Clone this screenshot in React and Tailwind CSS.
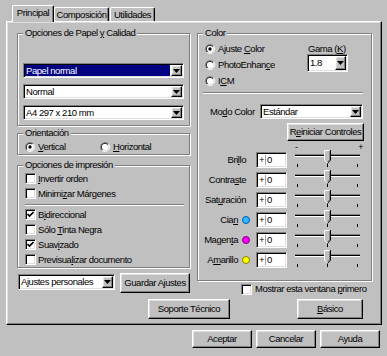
import React from "react";

const raised =
  "border border-t-white border-l-white border-r-black border-b-black shadow-[inset_-1px_-1px_0_#808080,inset_1px_1px_0_#dfdfdf]";
const sunken =
  "border border-t-[#808080] border-l-[#808080] border-r-white border-b-white shadow-[inset_1px_1px_0_#000,inset_-1px_-1px_0_#dfdfdf]";

function Group({ label, className, children }) {
  return (
    <div className={`border border-[#808080] shadow-[inset_1px_1px_0_#fff,1px_1px_0_#fff] ${className}`}>
      <div className="-mt-[7px] ml-[5px] px-[2px] w-fit bg-[#c0c0c0] whitespace-nowrap">{label}</div>
      {children}
    </div>
  );
}

function Arrow() {
  return (
    <svg width="7" height="4" viewBox="0 0 7 4">
      <path d="M0 0H7L3.5 4Z" fill="#000" />
    </svg>
  );
}

function Combo({ value, selected, className }) {
  return (
    <div className={`flex p-[1px] bg-white ${sunken} ${className}`}>
      <div className="flex-1 min-w-0 flex">
        <span
          className={`flex-1 flex items-center pl-[1px] mr-[1px] whitespace-nowrap overflow-hidden ${
            selected ? "bg-[#000080] text-white" : ""
          }`}
        >
          {value}
        </span>
      </div>
      <div className={`w-[11px] shrink-0 bg-[#c0c0c0] flex items-center justify-center ${raised}`}>
        <Arrow />
      </div>
    </div>
  );
}

function Button({ className, children }) {
  return (
    <div className={`bg-[#c0c0c0] flex items-center justify-center whitespace-nowrap ${raised} ${className}`}>
      {children}
    </div>
  );
}

function Radio({ checked }) {
  return (
    <svg width="10" height="10" viewBox="0 0 12 12" className="shrink-0">
      <defs>
        <linearGradient id="rOut" x1="0" y1="0" x2="1" y2="1">
          <stop offset="0.5" stopColor="#808080" />
          <stop offset="0.5" stopColor="#ffffff" />
        </linearGradient>
        <linearGradient id="rIn" x1="0" y1="0" x2="1" y2="1">
          <stop offset="0.5" stopColor="#000000" />
          <stop offset="0.5" stopColor="#dfdfdf" />
        </linearGradient>
      </defs>
      <circle cx="6" cy="6" r="5.5" fill="none" stroke="url(#rOut)" />
      <circle cx="6" cy="6" r="4.5" fill="#fff" stroke="url(#rIn)" />
      {checked && <circle cx="6" cy="6" r="2" fill="#000" />}
    </svg>
  );
}

function Check({ checked }) {
  return (
    <div className={`w-[11px] h-[11px] shrink-0 bg-white ${sunken} flex items-center justify-center`}>
      {checked && (
        <svg width="7" height="7" viewBox="0 0 7 7">
          <path d="M0.5 3 L2.5 5 L6.5 1" fill="none" stroke="#000" strokeWidth="1.6" />
        </svg>
      )}
    </div>
  );
}

function CheckRow({ checked, children }) {
  return (
    <div className="flex items-center h-[15px] pl-[7px]">
      <Check checked={checked} />
      <span className="ml-[2px] whitespace-nowrap">{children}</span>
    </div>
  );
}

function Slider() {
  return (
    <svg width="68" height="20" className="ml-[7px] -mt-[3px] shrink-0">
      <rect x="1" y="5" width="65" height="1" fill="#808080" />
      <rect x="1" y="6" width="65" height="1" fill="#000" />
      <rect x="1" y="7" width="65" height="1" fill="#fff" />
      <polygon points="30,1 37,1 37,11 33.5,14.5 30,11" fill="#c0c0c0" />
      <path d="M30.5 11 V1.5 H36" fill="none" stroke="#fff" />
      <path d="M30.5 11 L33.5 14" fill="none" stroke="#fff" />
      <path d="M36.5 1 V11 L33.5 14.5" fill="none" stroke="#000" />
      <path d="M35.5 2 V10.5 L33.5 12.5" fill="none" stroke="#808080" />
      <rect x="3" y="15" width="1" height="3" fill="#000" />
      <rect x="33" y="15" width="1" height="3" fill="#000" />
      <rect x="63" y="15" width="1" height="3" fill="#000" />
    </svg>
  );
}

const sliders = [
  { label: <>Bri<u>l</u>lo</> },
  { label: <>Contra<u>s</u>te</> },
  { label: <>Sat<u>u</u>ración</> },
  { label: <>Cia<u>n</u></>, dot: "bg-[#30b8ff] border-[#0058b0]" },
  { label: <>Magen<u>t</u>a</>, dot: "bg-[#ff00ff] border-[#800080]" },
  { label: <>A<u>m</u>arillo</>, dot: "bg-[#ffff00] border-[#808000]" },
];

function Tab({ active, className, children }) {
  return active ? (
    <div className={`relative z-10 h-[17px] bg-[#c0c0c0] rounded-t-[2px] border-t border-l border-r border-t-white border-l-white border-r-black shadow-[inset_-1px_0_0_#808080] flex justify-center pt-[1px] whitespace-nowrap ${className}`}>
      {children}
    </div>
  ) : (
    <div className={`h-[14px] mb-[1px] bg-[#c0c0c0] rounded-t-[2px] border-t border-l border-r border-t-white border-l-white border-r-black shadow-[inset_-1px_0_0_#808080] flex justify-center pt-[1px] whitespace-nowrap ${className}`}>
      {children}
    </div>
  );
}

export default function App() {
  return (
    <div className="w-[387px] h-[356px] overflow-hidden bg-[#c0c0c0] pt-[5px] pl-[6px] text-black text-[9.5px] tracking-[-0.45px] leading-[12px] font-['Liberation_Sans',Arial,sans-serif]">
      <div className="flex items-end h-[17px] pl-[6px]">
        <Tab active className="w-[42px]">Principal</Tab>
        <Tab className="w-[55px]">Composición</Tab>
        <Tab className="w-[45px] ml-[1px]">Utilidades</Tab>
      </div>

      <div className={`-mt-[1px] w-[376px] h-[304px] pt-[11px] pl-[10px] border border-t-white border-l-white border-r-black border-b-black shadow-[inset_-1px_-1px_0_#808080,inset_1px_1px_0_#dfdfdf]`}>
        <div className="flex items-start">
          {/* left column */}
          <div className="w-[173px]">
            <Group label={<>Opciones de Papel <u>y</u> Calidad</>} className="h-[93px]">
              <div className="px-[5px]">
                <Combo selected value="Papel normal" className="mt-[24px] h-[15px]" />
                <Combo value="Normal" className="mt-[6px] h-[15px]" />
                <Combo value="A4 297 x 210 mm" className="mt-[6px] h-[15px]" />
              </div>
            </Group>

            <Group label="Orientación" className="mt-[7px] h-[22px]">
              <div className="flex items-center h-[12px] mt-[2px] pl-[7px]">
                <div className="flex items-center w-[75px]">
                  <Radio checked />
                  <span className="ml-[3px]"><u>V</u>ertical</span>
                </div>
                <div className="flex items-center">
                  <Radio />
                  <span className="ml-[3px]"><u>H</u>orizontal</span>
                </div>
              </div>
            </Group>

            <Group label="Opciones de impresión" className="mt-[10px] h-[103px]">
              <CheckRow><u>I</u>nvertir orden</CheckRow>
              <CheckRow>Minimi<u>z</u>ar Márgenes</CheckRow>
              <div className="mt-[3px] ml-[7px] mr-[5px] h-[2px] border-t border-t-[#808080] border-b border-b-white" />
              <div className="mt-[1px]">
                <CheckRow checked>B<u>i</u>direccional</CheckRow>
                <CheckRow>Sólo <u>T</u>inta Negra</CheckRow>
                <CheckRow checked>Suav<u>i</u>zado</CheckRow>
                <CheckRow>Previsua<u>l</u>izar documento</CheckRow>
              </div>
            </Group>

            <div className="flex items-start mt-[5px]">
              <Combo value="Ajustes personales" className="ml-[1px] mt-[1px] w-[97px] h-[16px]" />
              <Button className="ml-[5px] w-[70px] h-[20px]">Guardar Ajustes</Button>
            </div>
          </div>

          {/* right column */}
          <div className="ml-[7px] w-[175px]">
            <Group label="Color" className="h-[248px]">
              <div className="flex mt-[2px]">
                <div className="w-[109px] pl-[7px]">
                  <div className="flex items-center h-[16px]">
                    <Radio checked />
                    <span className="ml-[3px] whitespace-nowrap">Ajuste <u>C</u>olor</span>
                  </div>
                  <div className="flex items-center h-[16px]">
                    <Radio />
                    <span className="ml-[3px] whitespace-nowrap">PhotoEnhan<u>c</u>e</span>
                  </div>
                  <div className="flex items-center h-[16px]">
                    <Radio />
                    <span className="ml-[3px] whitespace-nowrap">I<u>C</u>M</span>
                  </div>
                </div>
                <div>
                  <div className="mt-[2px] ml-[1px] whitespace-nowrap">Gama (<u>K</u>)</div>
                  <Combo value="1.8" className="-mt-[1px] w-[41px] h-[18px]" />
                </div>
              </div>

              <div className="mt-[3px] ml-[5px] w-[160px] h-[2px] border-t border-t-[#808080] border-b border-b-white" />

              <div className="flex items-center h-[15px] mt-[10px]">
                <span className="ml-[12px] w-[50px] whitespace-nowrap">Mo<u>d</u>o Color</span>
                <Combo value="Estándar" className="w-[103px] h-[15px]" />
              </div>

              <Button className="mt-[4px] ml-[89px] w-[77px] h-[18px]">R<u>e</u>iniciar Controles</Button>

              <div className="ml-[97px] w-[68px] h-[11px] flex justify-between items-center text-[9px] leading-[8px]">
                <span>-</span>
                <span>+</span>
              </div>

              {sliders.map((s, i) => (
                <div key={i} className="flex items-start h-[20px]">
                  <div className="w-[52px] h-[16px] flex justify-end items-center whitespace-nowrap">
                    <span className={s.dot ? "" : "mr-[4px]"}>{s.label}</span>
                    {s.dot && <span className={`ml-[4px] w-[8px] h-[8px] rounded-full border ${s.dot}`} />}
                  </div>
                  <div className={`ml-[6px] w-[31px] h-[16px] shrink-0 bg-white ${sunken} flex items-center pl-[2px]`}>
                    <span>+</span>
                    <span className="w-px h-[10px] bg-[#a0a0a0] mx-[1px]" />
                    <span>0</span>
                  </div>
                  <Slider />
                </div>
              ))}
            </Group>

            <div className="flex items-center h-[12px] mt-[2px] ml-[44px]">
              <Check />
              <span className="ml-[3px] whitespace-nowrap">Mostrar esta ventana <u>p</u>rimero</span>
            </div>
          </div>
        </div>

        <div className="flex mt-[4px]">
          <Button className="ml-[131px] w-[82px] h-[20px]">Soporte Técnico</Button>
          <Button className="ml-[67px] w-[66px] h-[20px]"><u>B</u>ásico</Button>
        </div>
      </div>

      <div className="flex gap-[4px] ml-[186px] mt-[5px]">
        <Button className="w-[60px] h-[18px]">Aceptar</Button>
        <Button className="w-[60px] h-[18px]">Cancelar</Button>
        <Button className="w-[60px] h-[18px]">Ayuda</Button>
      </div>
    </div>
  );
}
